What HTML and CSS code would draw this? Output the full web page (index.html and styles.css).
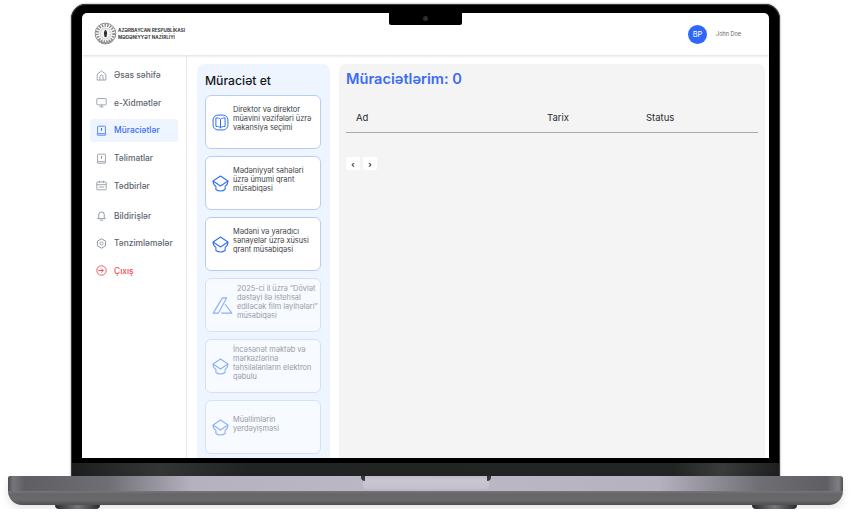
FILE: index.html
```html
<!DOCTYPE html>
<html>
<head>
  <title>Müraciətlər</title>
  <link rel="stylesheet" href="styles.css">
</head>
<body>
  <svg class="defs" width="0" height="0">
    <symbol id="cap" viewBox="0 0 24 24">
      <path d="M12 1.500 22.500 8.500 12 15.500 1.500 8.500z" fill="none" stroke="currentColor" stroke-width="1.500" stroke-linejoin="round"/>
      <path d="M1.500 8.500c0 3.500 1.500 6 4 7.500v4.500c2 1.500 4.200 2.200 6.500 2.200s4.500-.7 6.500-2.200V16c2.500-1.500 4-4 4-7.500" fill="none" stroke="currentColor" stroke-width="1.500" stroke-linejoin="round"/>
    </symbol>
    <symbol id="tablet" viewBox="0 0 14 14">
      <path d="M2 11V2.500a1 1 0 0 1 1-1h8a1 1 0 0 1 1 1V11zM2 11c-.6.5-.6 1.500 0 2h10c.6-.5.6-1.500 0-2" fill="none" stroke="currentColor" stroke-linejoin="round"/>
      <path d="M7 3.800v3.500" stroke="currentColor" stroke-width="1.400"/>
    </symbol>
  </svg>

  <div class="laptop">
    <div class="lid">
      <div class="screen">
        <div class="notch"><span class="camera"></span></div>

        <!-- Header -->
        <header class="topbar">
          <div class="brand">
            <svg class="seal" viewBox="0 0 24 26">
              <circle cx="12" cy="12.500" r="10.800" fill="#fff" stroke="#777" stroke-width=".9"/>
              <circle cx="12" cy="12.500" r="8.600" fill="none" stroke="#8a8a8a" stroke-width="3" stroke-dasharray="1.500 1.300"/>
              <circle cx="12" cy="12.500" r="5.800" fill="#f2f2f2" stroke="#999" stroke-width=".5"/>
              <path d="M12 8.500c1.500 1.500 2 3 1.500 5l-.5 2.500h-2l-.5-2.500c-.5-2 0-3.500 1.500-5z" fill="#333"/>
              <path d="M4 20c4 4.500 12 4.500 16 0l-1.500-1c-3 3-10 3-13 0z" fill="#999"/>
            </svg>
            <div class="brand-name">
              <span>AZƏRBAYCAN RESPUBLİKASI</span>
              <span>MƏDƏNİYYƏT NAZİRLİYİ</span>
            </div>
          </div>
          <div class="user">
            <span class="avatar">BP</span>
            <span class="user-name">John Doe</span>
          </div>
        </header>

        <div class="content">
          <!-- Sidebar -->
          <nav class="sidebar">
            <a class="nav-item">
              <svg class="nav-icon" viewBox="0 0 14 14"><path d="M1.500 5.500 7 1.200l5.500 4.300v7.300h-11zM5 12.800V8.500a2 2 0 0 1 4 0v4.300" fill="none" stroke="currentColor" stroke-linejoin="round"/></svg>
              Əsas səhifə
            </a>
            <a class="nav-item">
              <svg class="nav-icon" viewBox="0 0 14 14"><rect x="1" y="2" width="12" height="8" rx="1" fill="none" stroke="currentColor"/><path d="M7 10v2.500M4.500 12.500h5" stroke="currentColor"/></svg>
              e-Xidmətlər
            </a>
            <a class="nav-item active">
              <svg class="nav-icon"><use href="#tablet"/></svg>
              Müraciətlər
            </a>
            <a class="nav-item">
              <svg class="nav-icon"><use href="#tablet"/></svg>
              Təlimatlar
            </a>
            <a class="nav-item">
              <svg class="nav-icon" viewBox="0 0 14 14"><rect x="1" y="2.500" width="12" height="10" rx="1" fill="none" stroke="currentColor"/><path d="M1 6h12M4.500 1v2.500M9.500 1v2.500M3.500 9h7" stroke="currentColor"/></svg>
              Tədbirlər
            </a>
            <a class="nav-item gap-top">
              <svg class="nav-icon" viewBox="0 0 14 14"><path d="M3.500 9.500V6a3.500 3.500 0 0 1 7 0v3.500l1.500 1.500H2zM5.300 13h3.400" fill="none" stroke="currentColor" stroke-width="1.200" stroke-linejoin="round"/></svg>
              Bildirişlər
            </a>
            <a class="nav-item">
              <svg class="nav-icon" viewBox="0 0 14 14"><path d="M7 1 12.200 4v6L7 13l-5.200-3V4z" fill="none" stroke="currentColor" stroke-width="1.200" stroke-linejoin="round"/><circle cx="7" cy="7" r="2" fill="none" stroke="currentColor"/></svg>
              Tənzimləmələr
            </a>
            <a class="nav-item logout">
              <svg class="nav-icon" viewBox="0 0 14 14"><circle cx="7" cy="7" r="6" fill="none" stroke="currentColor" stroke-width="1.100"/><path d="M3 7h6M6.800 4.500 9.300 7l-2.500 2.500" fill="none" stroke="currentColor" stroke-width="1.200"/></svg>
              Çıxış
            </a>
          </nav>

          <!-- Apply panel -->
          <section class="apply">
            <h2>Müraciət et</h2>
            <div class="card">
              <svg class="card-icon" viewBox="0 0 24 24"><rect x="1.500" y="1.500" width="21" height="21" rx="7" fill="none" stroke="currentColor" stroke-width="1.400"/><path d="M12 7.500C10.500 6 8.500 5.500 5.500 5.500v12c3 0 5 .5 6.500 2 1.500-1.500 3.500-2 6.500-2v-12c-3 0-5 .5-6.500 2zM12 7.500v12" fill="none" stroke="currentColor" stroke-width="1.400" stroke-linejoin="round"/></svg>
              <p>Direktor və direktor müavini vəzifələri üzrə vakansiya seçimi</p>
            </div>
            <div class="card">
              <svg class="card-icon"><use href="#cap"/></svg>
              <p>Mədəniyyət sahələri üzrə ümumi qrant müsabiqəsi</p>
            </div>
            <div class="card">
              <svg class="card-icon"><use href="#cap"/></svg>
              <p>Mədəni və yaradıcı sənayelər üzrə xüsusi qrant müsabiqəsi</p>
            </div>
            <div class="card disabled">
              <svg class="card-icon film" viewBox="0 0 24 20"><path d="M1 19 12 1h5L7 19zM15 8.500 23 19H10.500" fill="none" stroke="currentColor" stroke-width="1.300" stroke-linejoin="round"/></svg>
              <p>2025-ci il üzrə “Dövlət dəstəyi ilə istehsal ediləcək film layihələri” müsabiqəsi</p>
            </div>
            <div class="card disabled">
              <svg class="card-icon"><use href="#cap"/></svg>
              <p>İncəsənət məktəb və mərkəzlərinə təhsilalanların elektron qəbulu</p>
            </div>
            <div class="card disabled">
              <svg class="card-icon"><use href="#cap"/></svg>
              <p>Müəllimlərin yerdəyişməsi</p>
            </div>
          </section>

          <!-- My applications -->
          <main class="applications">
            <h1>Müraciətlərim: 0</h1>
            <div class="table-head">
              <span class="col-name">Ad</span>
              <span class="col-date">Tarix</span>
              <span>Status</span>
            </div>
            <div class="pager">
              <button type="button">‹</button>
              <button type="button">›</button>
            </div>
          </main>
        </div>
      </div>
      <div class="chin"></div>
    </div>

    <div class="base">
      <div class="thumb"></div>
    </div>
    <div class="feet">
      <span class="foot"></span>
      <span class="foot"></span>
    </div>
  </div>
</body>
</html>
```

FILE: styles.css
```css
/* Laptop frame */
body {
  margin: 0;
  background: #fff;
  font-family: Inter, "Noto Sans", sans-serif;
  overflow: hidden;
}
.defs {
  display: block;
  height: 0;
}
.laptop {
  width: 835px;
  margin: 4px 0 0 8px;
  display: flex;
  flex-direction: column;
  align-items: center;
}
.lid {
  width: 709px;
  height: 472px;
  box-sizing: border-box;
  padding: 9px 11px 0;
  background: #000;
  border-radius: 15px 15px 0 0;
  box-shadow: inset 0 0 0 1px #3c3c3c, 0 0 2px rgba(0, 0, 0, 0.5);
}
.screen {
  position: relative;
  height: 445px;
  background: #fff;
  border-radius: 5px 5px 0 0;
  overflow: hidden;
  display: flex;
  flex-direction: column;
}
.notch {
  position: absolute;
  top: 0;
  left: 307px;
  width: 73px;
  height: 12px;
  background: #000;
  border-radius: 0 0 2px 2px;
  display: flex;
  justify-content: center;
  padding-top: 3px;
  box-sizing: border-box;
}
.camera {
  width: 5px;
  height: 5px;
  border-radius: 50%;
  background: #2a2d33;
}
.chin {
  height: 13px;
  margin: 5px -10px 0;
  background: linear-gradient(90deg, #1c1e1d, #343635 12%, #222423 25%, #232524 85%, #3a3c3b 92%, #1d1f1e);
}
.base {
  width: 835px;
  height: 29px;
  border-radius: 2px 3px 14px 14px;
  display: flex;
  justify-content: center;
  background:
    linear-gradient(90deg, #4e4d50 0, #77767b 0.6%, #5f5e62 2%, #6f6e74 12%, #b5b1bf 22%, #bdb9c6 50%, #b5b1bf 78%, #6f6e74 90%, #5f5e62 98%, #7f7e83 99.5%, #4e4d50 100%) top / 100% 15px no-repeat,
    linear-gradient(180deg, #777679 15px, #666568 18px, #69686b 24px, #4f4e50 29px);
  box-shadow: 0 4px 8px rgba(0, 0, 0, 0.1);
}
.thumb {
  position: relative;
  width: 126px;
  height: 13px;
  background: linear-gradient(180deg, #bdb9c6, #c9c6d2 30%, #c4c1cd);
  border-radius: 0 0 4px 4px;
}
.thumb::before,
.thumb::after {
  content: "";
  position: absolute;
  top: 0;
  width: 4px;
  height: 5px;
  background: #38373a;
}
.thumb::before {
  left: -2px;
  border-radius: 0 0 0 4px;
}
.thumb::after {
  right: -2px;
  border-radius: 0 0 4px 0;
}
.feet {
  width: 100%;
  box-sizing: border-box;
  padding: 0 46px 0 47px;
  display: flex;
  justify-content: space-between;
}
.foot {
  width: 45px;
  height: 4px;
  background: linear-gradient(90deg, #2a2a2c, #77767a 50%, #2a2a2c);
  border-radius: 0 0 8px 8px;
}

/* Header */
.topbar {
  height: 42px;
  flex-shrink: 0;
  box-sizing: border-box;
  padding: 0 28px 0 12px;
  display: flex;
  justify-content: space-between;
  align-items: center;
  box-shadow: 0 1px 3px rgba(0, 0, 0, 0.14);
}
.brand {
  display: flex;
  align-items: center;
  gap: 1px;
}
.seal {
  width: 23px;
  height: 26px;
}
.brand-name {
  display: flex;
  flex-direction: column;
  gap: 1px;
  font-size: 4.6px;
  line-height: 5.500px;
  font-weight: 700;
  letter-spacing: 0.02px;
  color: #3a3a3a;
}
.user {
  display: flex;
  align-items: center;
  gap: 9px;
}
.avatar {
  width: 19px;
  height: 19px;
  border-radius: 50%;
  background: #2f66fb;
  color: #fff;
  font-size: 7.500px;
  display: flex;
  align-items: center;
  justify-content: center;
}
.user-name {
  font-size: 5.500px;
  color: #666;
}

/* Content */
.content {
  flex: 1;
  display: flex;
  min-height: 0;
}
.sidebar {
  width: 105px;
  flex-shrink: 0;
  box-sizing: border-box;
  padding: 8.600px 8px 0;
  border-right: 1px solid #e8e8e8;
  display: flex;
  flex-direction: column;
  align-items: stretch;
}
.nav-item {
  height: 23px;
  margin-bottom: 4.700px;
  padding-left: 5.500px;
  display: flex;
  align-items: center;
  gap: 7.500px;
  font-size: 8.400px;
  font-weight: 500;
  color: #5d6470;
  border-radius: 3px;
}
.nav-icon {
  width: 11px;
  height: 11px;
  color: #87909c;
  flex-shrink: 0;
}
.nav-item.active {
  background: #eef5ff;
  color: #3b6cf6;
}
.nav-item.active .nav-icon {
  color: #3b6cf6;
}
.nav-item.gap-top {
  margin-top: 2px;
}
.nav-item.logout,
.nav-item.logout .nav-icon {
  color: #f0484e;
}

/* Apply panel */
.apply {
  width: 133px;
  flex-shrink: 0;
  box-sizing: border-box;
  margin: 9px 9px 0 10px;
  padding: 0 9px 0 8px;
  background: #eff5fe;
  border-radius: 7px 7px 0 0;
  display: flex;
  flex-direction: column;
  gap: 7px;
}
.apply h2 {
  margin: 9px 0 0;
  height: 15px;
  font-size: 12.200px;
  line-height: 15px;
  font-weight: 500;
  color: #16181d;
}
.card {
  height: 54px;
  flex-shrink: 0;
  box-sizing: border-box;
  padding: 0 1px 0 6px;
  background: #fff;
  border: 1px solid #b4cdfb;
  border-radius: 6px;
  display: flex;
  align-items: center;
  gap: 4px;
  color: #2e6cf6;
}
.card p {
  margin: 0 0 7px;
  font-size: 7.400px;
  line-height: 9px;
  color: #3a3d44;
}
.card-icon {
  width: 17px;
  height: 17px;
  flex-shrink: 0;
}
.card.disabled {
  opacity: 0.5;
}
.card-icon.film {
  width: 21px;
}

/* My applications */
.applications {
  flex: 1;
  margin: 9px 4px 0 0;
  padding: 5px 7px 0;
  background: #f4f4f4;
  border-radius: 7px 7px 0 0;
}
.applications h1 {
  margin: 0;
  font-size: 14.600px;
  line-height: 20px;
  font-weight: 600;
  color: #3b6cf6;
}
.table-head {
  margin-top: 15px;
  height: 28px;
  padding: 0 10px 2px;
  box-sizing: content-box;
  height: 26px;
  display: flex;
  align-items: center;
  font-size: 9.500px;
  color: #2b2b2b;
  border-bottom: 1px solid #a9a9a9;
}
.col-name {
  width: 191px;
}
.col-date {
  width: 99px;
}
.pager {
  margin-top: 24px;
  display: flex;
  gap: 3px;
}
.pager button {
  width: 14px;
  height: 13px;
  padding: 0;
  border: none;
  border-radius: 2px;
  background: #fff;
  color: #333;
  font-size: 8px;
  font-weight: 700;
  line-height: 12px;
  font-family: Inter, sans-serif;
}
```
